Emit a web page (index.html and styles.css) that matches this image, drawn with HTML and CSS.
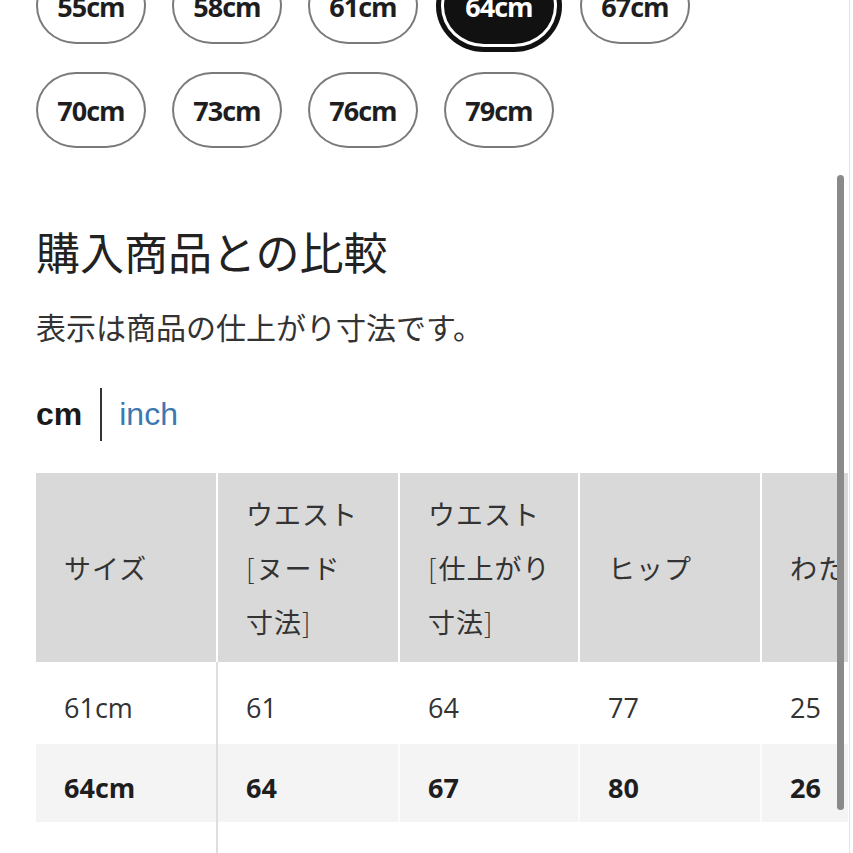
FILE: index.html
```html
<!DOCTYPE html>
<html lang="ja">
<head>
<meta charset="utf-8">
<title>購入商品との比較</title>
<link rel="stylesheet" href="styles.css">
</head>
<body>
<div class="page">
  <div class="chips">
    <div class="chip">55cm</div>
    <div class="chip">58cm</div>
    <div class="chip">61cm</div>
    <div class="chip selected">64cm</div>
    <div class="chip">67cm</div>
    <div class="chip">70cm</div>
    <div class="chip">73cm</div>
    <div class="chip">76cm</div>
    <div class="chip">79cm</div>
  </div>

  <h2 class="title">購入商品との比較</h2>
  <p class="note">表示は商品の仕上がり寸法です。</p>

  <div class="units">
    <span class="unit active">cm</span>
    <span class="sep"></span>
    <span class="unit link">inch</span>
  </div>

  <div class="table-wrap">
    <table class="size-table">
      <colgroup>
        <col class="c1"><col class="c2"><col class="c3"><col class="c4"><col class="c5">
      </colgroup>
      <thead>
        <tr>
          <th>サイズ</th>
          <th>ウエスト<br><span class="br">[</span>ヌード<br>寸法<span class="br">]</span></th>
          <th>ウエスト<br><span class="br">[</span>仕上がり<br>寸法<span class="br">]</span></th>
          <th>ヒップ</th>
          <th>わたり</th>
        </tr>
      </thead>
      <tbody>
        <tr class="r1">
          <td>61cm</td><td>61</td><td>64</td><td>77</td><td>25</td>
        </tr>
        <tr class="r2 current">
          <td>64cm</td><td>64</td><td>67</td><td>80</td><td>26</td>
        </tr>
        <tr class="r3">
          <td>&nbsp;</td><td></td><td></td><td></td><td></td>
        </tr>
      </tbody>
    </table>
  </div>
</div>
<div class="edge-line"></div>
<div class="scrollbar"></div>
</body>
</html>
```

FILE: styles.css
```css
html, body {
  margin: 0;
  padding: 0;
  background: #fff;
  overflow: hidden;
}
body {
  width: 853px;
  height: 853px;
  position: relative;
  font-family: "Noto Sans CJK JP", sans-serif;
  color: #222;
}
.page {
  padding-left: 36px;
}
.chips {
  margin-top: -32px;
  display: flex;
  flex-wrap: wrap;
  column-gap: 26px;
  row-gap: 28px;
  width: 700px;
}
.chip {
  box-sizing: border-box;
  width: 110px;
  height: 76px;
  border: 2px solid #7a7a7a;
  border-radius: 42px / 40px;
  display: flex;
  align-items: center;
  justify-content: center;
  font-family: "Open Sans", sans-serif;
  font-weight: 700;
  font-size: 27px;
  letter-spacing: -1px;
  color: #1e1e1e;
}
.chip.selected {
  background: #111;
  color: #fff;
  border-color: #111;
  box-shadow: 0 0 0 3px #fff, 0 0 0 8px #111;
}
.title {
  margin: 72px 0 0 0;
  font-size: 44px;
  line-height: 62px;
  font-weight: 400;
  color: #222;
}
.note {
  margin: 22px 0 0 0;
  font-size: 30px;
  line-height: 44px;
  color: #333;
}
.units {
  margin-top: 40px;
  height: 53px;
  display: flex;
  align-items: center;
  font-family: "Liberation Sans", Arial, sans-serif;
  font-size: 32px;
}
.unit.active {
  font-weight: 700;
  color: #1a1a1a;
}
.sep {
  width: 2px;
  height: 53px;
  background: #333;
  margin: 0 17px 0 18px;
}
.unit.link {
  color: #3d78b0;
}
.table-wrap {
  margin-top: 32px;
  width: 812px;
  overflow: hidden;
}
.size-table {
  table-layout: fixed;
  width: 942px;
  border-collapse: separate;
  border-spacing: 0;
  font-family: "Open Sans", "Noto Sans CJK JP", sans-serif;
}
.c1 { width: 182px; }
.c2 { width: 182px; }
.c3 { width: 180px; }
.c4 { width: 182px; }
.c5 { width: 216px; }
.size-table th {
  background: #d9d9d9;
  height: 189px;
  box-sizing: border-box;
  padding: 0 0 0 28px;
  text-align: left;
  vertical-align: middle;
  font-family: "Noto Sans CJK JP", sans-serif;
  font-weight: 400;
  font-size: 27px;
  line-height: 54px;
  letter-spacing: 1px;
  color: #333;
  white-space: nowrap;
  border-right: 2px solid #fff;
}
.size-table th .br {
  font-weight: 300;
  letter-spacing: 0;
  margin-right: 2px;
}
.size-table td {
  box-sizing: border-box;
  padding: 8px 0 0 28px;
  text-align: left;
  vertical-align: middle;
  font-size: 27px;
  color: #333;
  border-right: 2px solid transparent;
}
.size-table td:first-child {
  border-right: 2px solid #dedede;
}
.size-table tr.r1 td {
  height: 82px;
  background: #fff;
}
.size-table tr.r2 td {
  height: 78px;
  background: #f4f4f4;
  font-weight: 700;
  color: #1e1e1e;
  border-right-color: #fbfbfb;
}
.size-table tr.r2 td:first-child {
  border-right-color: #dedede;
}
.size-table tr.r3 td {
  height: 80px;
  background: #fff;
}
.edge-line {
  position: absolute;
  left: 849px;
  top: 0;
  width: 1px;
  height: 853px;
  background: #e4e4e4;
}
.scrollbar {
  position: absolute;
  left: 837px;
  top: 175px;
  width: 7px;
  height: 635px;
  background: #8a8a8a;
  border-radius: 4px;
}
```
